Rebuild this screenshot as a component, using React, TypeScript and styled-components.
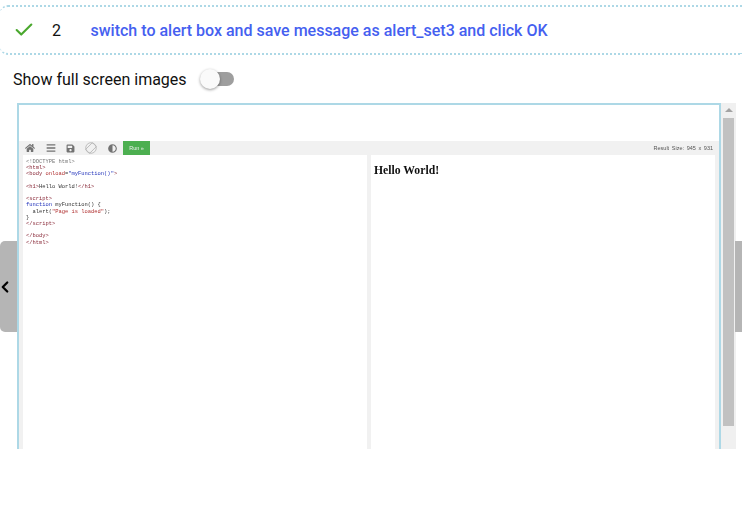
import React from "react";
import styled, { createGlobalStyle } from "styled-components";
import { Check, ChevronLeft } from "lucide-react";
import { FaHome, FaBars, FaSave, FaAdjust } from "react-icons/fa";

const Global = createGlobalStyle`
  html, body { margin: 0; padding: 0; background: #fff; }
  body { font-family: Roboto, "Liberation Sans", sans-serif; }
`;
const Page = styled.div`
  position: relative; width: 742px; height: 505px; overflow: hidden;
  display: flex; flex-direction: column; padding-top: 5px; box-sizing: border-box;
`;
const StepRow = styled.div`
  height: 50px; flex: none; box-sizing: border-box; display: flex; align-items: center;
  border-top: 2px dotted #add8e6; border-bottom: 2px dotted #add8e6;
  border-radius: 8px 0 0 8px; padding-left: 13px; font-size: 16px;
`;
const StepIcon = styled.span`display: flex; width: 39px; color: #4aa82e;`;
const StepNumber = styled.span`width: 38.5px; color: #111;`;
const StepText = styled.span`color: #4560f0; font-weight: 500;`;
const ToggleRow = styled.div`
  height: 48px; flex: none; display: flex; align-items: center; padding-left: 13px; font-size: 16px; color: #111; box-sizing: border-box;
`;
const Track = styled.span`
  position: relative; display: block; width: 28px; height: 14px; margin-left: 19px;
  border-radius: 7px; background: #9e9e9e;
`;
const Thumb = styled.span`
  position: absolute; left: -6px; top: -3px; width: 20px; height: 20px; border-radius: 50%;
  background: #fafafa; box-shadow: 0 1px 3px rgba(0,0,0,.4);
`;
const ViewerRow = styled.div`display: flex; height: 346px; flex: none; padding-left: 17px;`;
const Frame = styled.div`
  width: 704px; box-sizing: border-box; border: 2px solid #add8e6; border-bottom: 0;
  display: flex; flex-direction: column; padding-top: 36px; background: #fff; overflow: hidden;
`;
const Scrollbar = styled.div`
  width: 15px; background: #f0f0f0; display: flex; flex-direction: column; align-items: center; padding-top: 5px; box-sizing: border-box;
`;
const Arrow = styled.span`
  width: 0; height: 0; border-left: 4px solid transparent; border-right: 4px solid transparent; border-bottom: 4px solid #a3a3a3;
`;
const ScrollThumb = styled.div`width: 11px; height: 308px; margin-top: 6px; background: #c1c1c1;`;
const Toolbar = styled.div`
  height: 14px; flex: none; background: #f1f1f1; display: flex; align-items: center; color: #727272;
`;
const ToolIcon = styled.span<{ $w: number }>`display: flex; justify-content: center; width: ${p => p.$w}px; flex: none;`;
const RunButton = styled.span`
  width: 27px; height: 14px; background: #4caf50; color: #eee; font: 5.5px "Liberation Sans", sans-serif;
  display: flex; align-items: center; justify-content: center; flex: none; filter: blur(.2px);
`;
const ResultSize = styled.span`
  margin-left: auto; margin-right: 6px; font: 5.5px "Liberation Sans", sans-serif; color: #555; word-spacing: 1.1px; filter: blur(.2px);
`;
const Panes = styled.div`
  flex: 1; display: flex; background: #f1f1f1; padding: 0 4px; gap: 4px;
`;
const Pane = styled.div`width: 344px; background: #fff; overflow: hidden; flex: none;`;
const Code = styled.pre`
  margin: 4px 0 0 3px; font: 5.43px/6.2px "Liberation Mono", monospace; color: #333; filter: blur(.3px);
`;
const Comment = styled.span`color: #777;`;
const Tag = styled.span`color: #8a2b3a;`;
const Attr = styled.span`color: #b03030;`;
const Val = styled.span`color: #2233bb;`;
const Hello = styled.h1`
  margin: 9px 0 0 3px; font: bold 11.7px "Liberation Serif", serif; color: #111; filter: blur(.2px);
`;
const SideHandle = styled.div`
  position: absolute; left: 0; top: 241px; width: 17px; height: 91px; background: #b5b5b5;
  border-radius: 5px 0 0 5px; display: flex; align-items: center; color: #000;
`;
const HandleChevron = styled(ChevronLeft)`margin-left: -4px;`;
const RightHandle = styled.div`
  position: absolute; right: 0; top: 241px; width: 7px; height: 91px; background: #b5b5b5;
`;

const RotatedPhone = () => (
  <svg width="12" height="12" viewBox="0 0 12 12" fill="none" stroke="#b4b4b4" strokeWidth="0.8">
    <circle cx="6" cy="6" r="5.3" />
    <rect x="3.2" y="1.2" width="5.6" height="9.6" rx=".6" transform="rotate(45 6 6)" />
  </svg>
);

export default function App() {
  return (
    <Page>
      <Global />
      <StepRow>
        <StepIcon><Check size={22} strokeWidth={2.3} /></StepIcon>
        <StepNumber>2</StepNumber>
        <StepText>switch to alert box and save message as alert_set3 and click OK</StepText>
      </StepRow>
      <ToggleRow>
        Show full screen images
        <Track><Thumb /></Track>
      </ToggleRow>
      <ViewerRow>
        <Frame>
          <Toolbar>
            <ToolIcon $w={21}><FaHome size={10} /></ToolIcon>
            <ToolIcon $w={21}><FaBars size={10} /></ToolIcon>
            <ToolIcon $w={19}><FaSave size={9} /></ToolIcon>
            <ToolIcon $w={21}><RotatedPhone /></ToolIcon>
            <ToolIcon $w={22}><FaAdjust size={9} /></ToolIcon>
            <RunButton>Run »</RunButton>
            <ResultSize>Result Size: 945 x 931</ResultSize>
          </Toolbar>
          <Panes>
            <Pane>
              <Code>
                <Comment>{"<!DOCTYPE html>"}</Comment>{"\n"}
                <Tag>{"<html>"}</Tag>{"\n"}
                <Tag>{"<body "}</Tag><Attr>onload</Attr>=<Val>"myFunction()"</Val><Tag>{">"}</Tag>{"\n\n"}
                <Tag>{"<h1>"}</Tag>Hello World!<Tag>{"</h1>"}</Tag>{"\n\n"}
                <Tag>{"<script>"}</Tag>{"\n"}
                <Val>function</Val> myFunction() {"{"}{"\n"}
                {"  alert("}<Attr>"Page is loaded"</Attr>{");"}{"\n"}
                {"}"}{"\n"}
                <Tag>{"</script>"}</Tag>{"\n\n"}
                <Tag>{"</body>"}</Tag>{"\n"}
                <Tag>{"</html>"}</Tag>
              </Code>
            </Pane>
            <Pane><Hello>Hello World!</Hello></Pane>
          </Panes>
        </Frame>
        <Scrollbar>
          <Arrow />
          <ScrollThumb />
        </Scrollbar>
      </ViewerRow>
      <SideHandle><HandleChevron size={18} strokeWidth={3} /></SideHandle>
      <RightHandle />
    </Page>
  );
}
